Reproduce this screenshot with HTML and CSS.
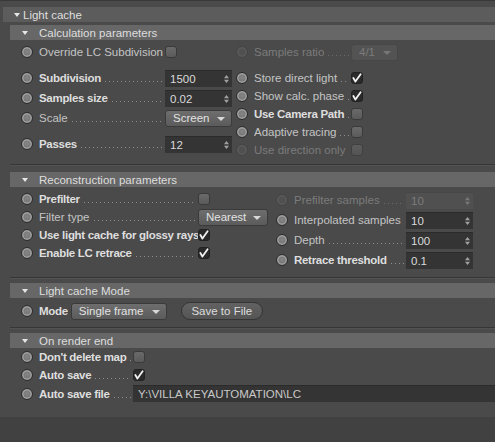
FILE: index.html
```html
<!DOCTYPE html>
<html lang="en">
  <head>
    <meta charset="UTF-8" />
    <title>Light cache</title>
    <link rel="stylesheet" href="styles.css">
  </head>
  <body>
    <div class="panel">
      <div class="group-head"><span class="tri"></span>Light cache</div>

      <!-- calculation -->
      <section class="sub calc">
        <div class="sub-head"><span class="tri"></span>Calculation parameters</div>

        <div class="cols override">
          <div class="row">
            <span class="radio"></span>
            <span class="lbl w-left">Override LC Subdivision<i class="dots"></i></span>
            <span class="check"></span>
          </div>
          <div class="row off">
            <span class="radio"></span>
            <span class="lbl w-right">Samples ratio<i class="dots"></i></span>
            <span class="select ratio">4/1<i class="arrow"></i></span>
          </div>
        </div>

        <div class="cols body">
          <div class="col left">
            <div class="row tall">
              <span class="radio"></span>
              <span class="lbl w-left strong">Subdivision<i class="dots"></i></span>
              <span class="num">1500<i class="spin"></i></span>
            </div>
            <div class="row tall">
              <span class="radio"></span>
              <span class="lbl w-left strong">Samples size<i class="dots"></i></span>
              <span class="num">0.02<i class="spin"></i></span>
            </div>
            <div class="row tall">
              <span class="radio"></span>
              <span class="lbl w-left">Scale<i class="dots"></i></span>
              <span class="select scale">Screen<i class="arrow"></i></span>
            </div>
            <div class="row tall passes">
              <span class="radio"></span>
              <span class="lbl w-left strong">Passes<i class="dots"></i></span>
              <span class="num">12<i class="spin"></i></span>
            </div>
          </div>
          <div class="col right">
            <div class="row">
              <span class="radio"></span>
              <span class="lbl w-right">Store direct light<i class="dots"></i></span>
              <span class="check on"></span>
            </div>
            <div class="row">
              <span class="radio"></span>
              <span class="lbl w-right">Show calc. phase<i class="dots"></i></span>
              <span class="check on"></span>
            </div>
            <div class="row">
              <span class="radio"></span>
              <span class="lbl w-right strong">Use Camera Path<i class="dots"></i></span>
              <span class="check"></span>
            </div>
            <div class="row">
              <span class="radio"></span>
              <span class="lbl w-right">Adaptive tracing<i class="dots"></i></span>
              <span class="check"></span>
            </div>
            <div class="row off">
              <span class="radio"></span>
              <span class="lbl w-right">Use direction only<i class="dots"></i></span>
              <span class="check"></span>
            </div>
          </div>
        </div>
        <div class="sep"></div>
      </section>

      <!-- reconstruction -->
      <section class="sub recon">
        <div class="sub-head"><span class="tri"></span>Reconstruction parameters</div>
        <div class="cols body">
          <div class="col left">
            <div class="row">
              <span class="radio"></span>
              <span class="lbl w-recon strong">Prefilter<i class="dots"></i></span>
              <span class="check"></span>
            </div>
            <div class="row">
              <span class="radio"></span>
              <span class="lbl w-recon">Filter type<i class="dots"></i></span>
              <span class="select filter">Nearest<i class="arrow"></i></span>
            </div>
            <div class="row">
              <span class="radio"></span>
              <span class="lbl w-recon strong">Use light cache for glossy rays<i class="dots"></i></span>
              <span class="check on"></span>
            </div>
            <div class="row">
              <span class="radio"></span>
              <span class="lbl w-recon strong">Enable LC retrace<i class="dots"></i></span>
              <span class="check on"></span>
            </div>
          </div>
          <div class="col right">
            <div class="row tall off">
              <span class="radio"></span>
              <span class="lbl w-interp">Prefilter samples<i class="dots"></i></span>
              <span class="num">10<i class="spin"></i></span>
            </div>
            <div class="row tall">
              <span class="radio"></span>
              <span class="lbl w-interp">Interpolated samples<i class="dots"></i></span>
              <span class="num">10<i class="spin"></i></span>
            </div>
            <div class="row tall">
              <span class="radio"></span>
              <span class="lbl w-interp">Depth<i class="dots"></i></span>
              <span class="num">100<i class="spin"></i></span>
            </div>
            <div class="row tall">
              <span class="radio"></span>
              <span class="lbl w-interp strong">Retrace threshold<i class="dots"></i></span>
              <span class="num">0.1<i class="spin"></i></span>
            </div>
          </div>
        </div>
        <div class="sep"></div>
      </section>

      <!-- mode -->
      <section class="sub mode">
        <div class="sub-head"><span class="tri"></span>Light cache Mode</div>
        <div class="row mode-row">
          <span class="radio"></span>
          <span class="lbl strong">Mode</span>
          <span class="select single">Single frame<i class="arrow"></i></span>
          <span class="button">Save to File</span>
        </div>
        <div class="sep"></div>
      </section>

      <!-- render end -->
      <section class="sub render-end">
        <div class="sub-head"><span class="tri"></span>On render end</div>
        <div class="row">
          <span class="radio"></span>
          <span class="lbl w-end strong">Don't delete map<i class="dots"></i></span>
          <span class="check"></span>
        </div>
        <div class="row">
          <span class="radio"></span>
          <span class="lbl w-end strong">Auto save<i class="dots"></i></span>
          <span class="check on"></span>
        </div>
        <div class="row last">
          <span class="radio"></span>
          <span class="lbl w-end strong">Auto save file<i class="dots"></i></span>
          <span class="path">Y:\VILLA KEYAUTOMATION\LC</span>
        </div>
      </section>
    </div>
  </body>
</html>
```

FILE: styles.css
```css
:root {
  --bg: #4a4a4a;
  --outer: #414141;
  --bar: #5c5c5c;
  --bar-sub: #676767;
  --field: #343434;
  --text: #c4c4c4;
  --text-strong: #dedede;
  --text-off: #7b7b7b;
  --dots: #8e8e8e;
}

* {
  box-sizing: border-box;
}

body {
  margin: 0;
  background: var(--outer);
  color: var(--text);
  font-family: "Liberation Sans", Arial, sans-serif;
  font-size: 11.5px;
}

.panel {
  height: 417px;
  padding-top: 6px;
  background: var(--bg);
  border-top: 1px solid #383838;
  overflow: hidden;
}

/* ───────────  headers  ─────────── */
.group-head,
.sub-head {
  display: flex;
  align-items: center;
  height: 15px;
  color: var(--text-strong);
  white-space: nowrap;
}

.group-head {
  margin-left: 3px;
  padding-left: 11px;
  background: var(--bar);
}

.sub-head {
  margin-left: 10px;
  padding-left: 12px;
  background: var(--bar-sub);
}

.tri {
  width: 0;
  height: 0;
  border-left: 3px solid transparent;
  border-right: 3px solid transparent;
  border-top: 4px solid #e6e6e6;
  margin-right: 3px;
}

.sub-head .tri {
  margin-right: 11px;
}

.sub {
  margin-top: 3px;
}

.sep {
  margin-left: 10px;
  height: 2px;
  border-top: 1px solid #363636;
  border-bottom: 1px solid #535353;
}

/* ───────────  layout  ─────────── */
.cols {
  display: grid;
  padding-left: 21px;
}

.calc .cols {
  grid-template-columns: 215px 1fr;
}

.recon .cols {
  grid-template-columns: 255px 1fr;
}

.override {
  margin-top: 3px;
}

.calc .body {
  margin-top: 7px;
}

.calc .body .right {
  padding-top: 1px;
}

.calc .sep {
  margin-top: 5px;
}

.recon {
  margin-top: 6px;
}

.recon .body {
  margin-top: 3px;
}

.recon .sep {
  margin-top: 7px;
}

.mode {
  margin-top: 4px;
}

.mode .sep {
  margin-top: 5px;
}

.render-end {
  margin-top: 4px;
}

.render-end .row:first-of-type {
  margin-top: 3px;
}

/* ───────────  rows  ─────────── */
.row {
  display: flex;
  align-items: center;
  height: 18px;
}

.row.tall {
  height: 20px;
}

.row.passes {
  margin-top: 6px;
}

.row.last {
  height: 19px;
}

.render-end .row,
.mode-row {
  padding-left: 21px;
}

.mode-row {
  height: 22px;
  margin-top: 2px;
}

.radio {
  flex: none;
  width: 12px;
  height: 12px;
  margin-right: 6px;
  border-radius: 50%;
  border: 1px solid #2e2e2e;
  background: radial-gradient(circle at 50% 45%, #858585, #6c6c6c);
  box-shadow: inset 0 0 0 1.5px #a2a2a2;
}

.lbl {
  display: flex;
  align-items: baseline;
  flex: none;
  white-space: nowrap;
  overflow: hidden;
}

.lbl.strong {
  font-weight: bold;
  letter-spacing: -0.3px;
  color: var(--text-strong);
}

.w-left { width: 126px; }
.w-right { width: 97px; }
.w-recon { width: 159px; }
.w-interp { width: 112px; }
.w-end { width: 94px; }

.dots {
  flex: 1;
  min-width: 0;
  height: 1px;
  margin: 0 2px 0 4px;
  background-image: linear-gradient(90deg, var(--dots) 1px, transparent 1px);
  background-size: 4px 1px;
  background-repeat: repeat-x;
}

/* disabled rows */
.off .radio {
  border-color: #444;
  background: #505050;
  box-shadow: inset 0 0 0 1.5px #5c5c5c;
}

.off .lbl,
.off .num,
.off .select {
  color: var(--text-off);
}

.off .dots {
  background-image: linear-gradient(90deg, #6a6a6a 1px, transparent 1px);
}

.off .check {
  opacity: 0.6;
}

/* ───────────  controls  ─────────── */
.check {
  flex: none;
  width: 12px;
  height: 12px;
  border-radius: 3px;
  border: 1px solid #3a3a3a;
  background: linear-gradient(#6a6a6a, #5a5a5a);
}

.check.on {
  border-color: #222;
  background: #2a2a2a url("data:image/svg+xml,%3Csvg xmlns='http://www.w3.org/2000/svg' width='12' height='12'%3E%3Cpath d='M2.4 6 L4.4 9.6 L9.8 2' fill='none' stroke='%23f2f2f2' stroke-width='1.8' stroke-linecap='round' stroke-linejoin='round'/%3E%3C/svg%3E") center / 12px 12px no-repeat;
}

.num,
.path {
  position: relative;
  display: flex;
  align-items: center;
  height: 17px;
  padding-left: 5px;
  background: var(--field);
  border-top: 1px solid #2b2b2b;
  color: #dadada;
}

.num {
  width: 67px;
}

.off .num {
  background: #505050;
  border-top-color: #474747;
}

.spin {
  position: absolute;
  right: 3px;
  top: 4px;
  width: 5px;
  height: 8px;
  background: url("data:image/svg+xml,%3Csvg xmlns='http://www.w3.org/2000/svg' width='5' height='8'%3E%3Cpath d='M0 3.3 L2.5 0 L5 3.3Z M0 4.7 L2.5 8 L5 4.7Z' fill='%23a0a0a0'/%3E%3C/svg%3E") no-repeat;
}

.off .spin {
  opacity: 0.5;
}

.select {
  position: relative;
  display: flex;
  align-items: center;
  height: 17px;
  padding-left: 7px;
  border: 1px solid #3a3a3a;
  border-radius: 3px;
  background: linear-gradient(#6e6e6e, #5b5b5b);
  color: #e2e2e2;
}

.select.ratio {
  width: 47px;
  background: #535353;
  border-color: #474747;
}

.select.scale { width: 67px; }
.select.filter { width: 70px; }

.select.single {
  width: 96px;
  margin-left: 3px;
}

.arrow {
  position: absolute;
  right: 6px;
  top: 6px;
  border-left: 4px solid transparent;
  border-right: 4px solid transparent;
  border-top: 4px solid #d8d8d8;
}

.off .arrow {
  border-top-color: #777;
}

.button {
  display: flex;
  align-items: center;
  justify-content: center;
  width: 82px;
  height: 18px;
  margin-left: 14px;
  border: 1px solid #353535;
  border-radius: 9px;
  background: linear-gradient(#626262, #555);
  color: #dcdcdc;
}

.path {
  flex: 1;
  color: #c8c8c8;
}
```
